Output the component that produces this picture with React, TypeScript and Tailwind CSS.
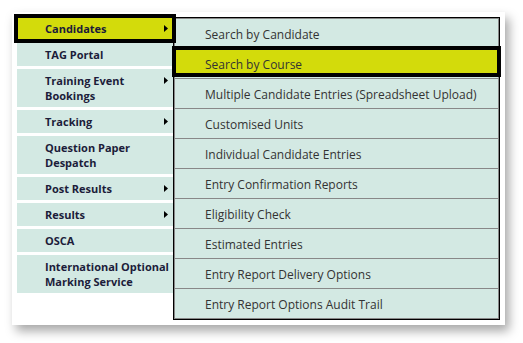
import React from 'react'

type NavItem = { label: string[]; sub?: boolean; active?: boolean }

const navItems: NavItem[] = [
  { label: ['Candidates'], sub: true, active: true },
  { label: ['TAG Portal'] },
  { label: ['Training Event', 'Bookings'], sub: true },
  { label: ['Tracking'], sub: true },
  { label: ['Question Paper', 'Despatch'] },
  { label: ['Post Results'], sub: true },
  { label: ['Results'], sub: true },
  { label: ['OSCA'] },
  { label: ['International Optional', 'Marking Service'] },
]

const subItems = [
  'Search by Candidate',
  'Search by Course',
  'Multiple Candidate Entries (Spreadsheet Upload)',
  'Customised Units',
  'Individual Candidate Entries',
  'Entry Confirmation Reports',
  'Eligibility Check',
  'Estimated Entries',
  'Entry Report Delivery Options',
  'Entry Report Options Audit Trail',
]

function Arrow() {
  return (
    <svg width="4" height="7" viewBox="0 0 4 7" className="absolute right-[5px] top-[8px]">
      <path d="M0 0 L4 3.5 L0 7 Z" fill="#000" />
    </svg>
  )
}

export default function App() {
  return (
    <div
      className="min-h-screen bg-white p-3"
      style={{ fontFamily: '"Open Sans", "Liberation Sans", sans-serif' }}
    >
      <div className="flex h-[313px] w-[493px] items-start bg-white pl-[5px] pt-[5px] shadow-[4px_6px_10px_rgba(0,0,0,0.35)]">
        {/* main menu */}
        <ul className="flex w-[156px] flex-col gap-[3px]">
          {navItems.map(item => (
            <li
              key={item.label[0]}
              className={
                'relative whitespace-nowrap py-[4px] pl-[28px] text-[11px] leading-[15px] font-bold text-[#1c1c3a] ' +
                (item.active
                  ? 'bg-[#d3db0b] outline-4 outline-black -outline-offset-1 z-10'
                  : 'bg-[#d3e9e3]')
              }
            >
              {item.label.map(l => (
                <div key={l}>{l}</div>
              ))}
              {item.sub && <Arrow />}
            </li>
          ))}
        </ul>

        {/* sub menu */}
        <div className="w-[327px] border border-black">
          <ul className="border border-[#888]">
            {subItems.map((s, i) => (
              <li
                key={s}
                className={
                  'relative flex items-center bg-[#d3e9e3] pl-[30px] pt-[3px] text-[12px] text-[#333] ' +
                  (i < subItems.length - 1 ? 'h-[30px] border-b border-[#888]' : 'h-[29px]')
                }
              >
                {i === 1 && (
                  <span className="absolute -left-[3px] -right-[3px] -top-[3px] h-[31px] border-4 border-black bg-[#d3db0b]" />
                )}
                <span className="relative">{s}</span>
              </li>
            ))}
          </ul>
        </div>
      </div>
    </div>
  )
}
